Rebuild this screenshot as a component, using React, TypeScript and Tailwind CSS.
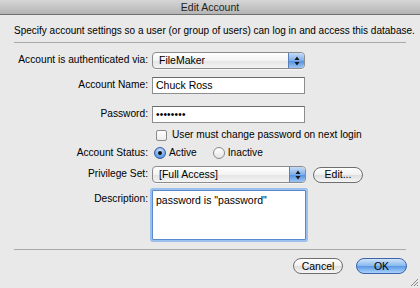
import React from "react";

const font = { fontFamily: '"Liberation Sans", Arial, sans-serif' };

function Arrows() {
  return (
    <div className="flex h-full w-[16px] items-center justify-center rounded-r-[4px] border-l border-[#5a7fb8] bg-[linear-gradient(#c6dcf6,#7fb0ec_50%,#4f8fe0_51%,#9cc6f4)]">
      <svg width="6" height="10" viewBox="0 0 6 10">
        <path d="M3 0.5 L5.5 4 L0.5 4 Z" fill="#1a1a1a" />
        <path d="M3 9.5 L5.5 6 L0.5 6 Z" fill="#1a1a1a" />
      </svg>
    </div>
  );
}

function Popup({ text, w }: { text: string; w: string }) {
  return (
    <div className={`flex h-[17px] ${w} items-center justify-between rounded-[4px] border border-[#8c8c8c] bg-[linear-gradient(#ffffff,#f3f3f3_50%,#e4e4e4_51%,#f4f4f4)] shadow-[0_1px_0_rgba(255,255,255,0.6)]`}>
      <span className="pl-[6px] text-[10.5px] leading-none text-black">{text}</span>
      <Arrows />
    </div>
  );
}

function Label({ children }: { children: React.ReactNode }) {
  return <div className="w-[134px] shrink-0 whitespace-nowrap text-right text-[10.2px] leading-none text-black">{children}</div>;
}

const btn =
  "flex h-[16px] items-center justify-center rounded-full border border-[#6e6e6e] bg-[linear-gradient(#ffffff,#f0f0f0_50%,#dedede_51%,#f6f6f6)] text-[10.5px] leading-none text-black";

export default function App() {
  return (
    <div className="relative h-[288px] w-[420px] overflow-hidden bg-[#e9e9e9]" style={font}>
      <div className="flex h-[15px] items-center justify-center border-b border-[#6f6f6f] bg-[linear-gradient(#d6d6d6,#b4b4b4)] text-[10.5px] leading-none text-[#1e1e1e]">
        Edit Account
      </div>
      <div className="px-[14px]">
        <div className="mt-[10px] whitespace-nowrap text-[10px] leading-[12px] text-black">
          Specify account settings so a user (or group of users) can log in and access this database.
        </div>
        <div className="mt-[5px] h-px bg-[#a9a9a9]" />

        <div className="mt-[9px] flex items-center gap-[4px]">
          <Label>Account is authenticated via:</Label>
          <Popup text="FileMaker" w="w-[153px]" />
        </div>

        <div className="mt-[8px] flex items-center gap-[4px]">
          <Label>Account Name:</Label>
          <div className="flex h-[17px] w-[153px] items-center border border-[#8d8d8d] border-t-[#6a6a6a] bg-white pl-[3px] text-[10.5px] leading-none">
            Chuck Ross
          </div>
        </div>

        <div className="mt-[12px] flex items-center gap-[4px]">
          <Label>Password:</Label>
          <div className="flex h-[17px] w-[153px] items-center border border-[#8d8d8d] border-t-[#6a6a6a] bg-white pl-[3px] text-[10px] leading-none tracking-[0.2px]">
            ••••••••
          </div>
        </div>

        <div className="mt-[5px] flex h-[14px] items-center gap-[4px]">
          <div className="w-[134px] shrink-0" />
          <div className="ml-[4px] h-[11px] w-[11px] rounded-[2px] border border-[#8a8a8a] bg-[linear-gradient(#ffffff,#ececec)]" />
          <span className="ml-[1px] text-[10.2px] leading-none text-black">User must change password on next login</span>
        </div>

        <div className="mt-[4px] flex h-[14px] items-center gap-[4px]">
          <Label>Account Status:</Label>
          <div className="ml-[2px] flex h-[12px] w-[12px] items-center justify-center rounded-full border border-[#3b5f9b] bg-[radial-gradient(circle_at_50%_30%,#d3e6fb,#6da6ea_60%,#3f80d8)]">
            <div className="h-[4px] w-[4px] rounded-full bg-[#111]" />
          </div>
          <span className="ml-[-1px] text-[10.2px] leading-none text-black">Active</span>
          <div className="ml-[12px] h-[12px] w-[12px] rounded-full border border-[#8a8a8a] bg-[linear-gradient(#ffffff,#e6e6e6)]" />
          <span className="ml-[-1px] text-[10.2px] leading-none text-black">Inactive</span>
        </div>

        <div className="mt-[6px] flex items-center gap-[4px]">
          <Label>Privilege Set:</Label>
          <Popup text="[Full Access]" w="w-[154px]" />
          <div className={`${btn} ml-[3px] w-[50px]`}>Edit...</div>
        </div>

        <div className="mt-[7px] flex items-start gap-[4px]">
          <div className="w-[134px] shrink-0 pt-[4px] text-right text-[10.2px] leading-none text-black">Description:</div>
          <div className="h-[50px] w-[154px] rounded-[1px] border border-[#5b8ad0] bg-white px-[3px] pt-[4px] text-[10.5px] leading-none text-black shadow-[0_0_0_2px_#9cc0ee]">
            password is "password"
          </div>
        </div>

        <div className="mt-[9px] h-px bg-[#a9a9a9]" />

        <div className="mt-[8px] flex justify-end gap-[13px]">
          <div className={`${btn} w-[50px]`}>Cancel</div>
          <div className="mr-[-1px] flex h-[16px] w-[51px] items-center justify-center rounded-full border border-[#3a63a8] bg-[linear-gradient(#cfe3f9,#86b8ef_50%,#5897e6_51%,#a9d2fa)] text-[10.5px] leading-none text-black">
            OK
          </div>
        </div>
      </div>
      <svg className="absolute bottom-[1px] right-[1px]" width="10" height="10" viewBox="0 0 10 10">
        <path d="M9 2 L2 9 M9 5 L5 9 M9 8 L8 9" stroke="#8a8a8a" strokeWidth="1" />
      </svg>
    </div>
  );
}
